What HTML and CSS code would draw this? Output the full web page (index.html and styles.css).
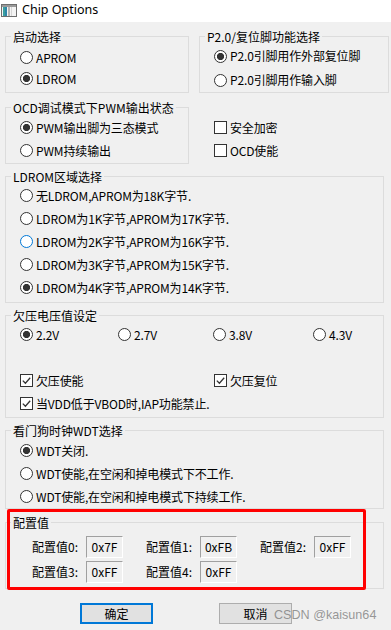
FILE: index.html
```html
<!DOCTYPE html>
<html lang="zh-CN">
<head>
<meta charset="utf-8">
<title>Chip Options</title>
<link rel="stylesheet" href="styles.css">
</head>
<body>
<div class="window">
  <header class="titlebar">
    <svg class="app-icon" width="16" height="13" viewBox="0 0 16 13" aria-hidden="true">
      <rect x="0.5" y="0.5" width="15" height="12" fill="#f4f4f4" stroke="#6e6e6e"/>
      <rect x="1" y="1" width="14" height="2" fill="#9a9a9a"/>
      <rect x="2" y="3" width="4" height="9" fill="#2f86a8"/>
      <rect x="2" y="3" width="2" height="9" fill="#3aa0a0"/>
      <rect x="7" y="3" width="2" height="9" fill="#b5b5b5"/>
      <rect x="10" y="3" width="1" height="9" fill="#d6d6d6"/>
    </svg>
    <span class="title">Chip Options</span>
  </header>

  <main class="content">
    <div class="row row-top">
      <fieldset class="grp grp-boot">
        <legend>启动选择</legend>
        <div class="opts">
          <div class="opt"><span class="radio"></span><span>APROM</span></div>
          <div class="opt"><span class="radio on"></span><span>LDROM</span></div>
        </div>
      </fieldset>
      <fieldset class="grp grp-p20">
        <legend>P2.0/复位脚功能选择</legend>
        <div class="opts">
          <div class="opt"><span class="radio on"></span><span>P2.0引脚用作外部复位脚</span></div>
          <div class="opt"><span class="radio"></span><span>P2.0引脚用作输入脚</span></div>
        </div>
      </fieldset>
    </div>

    <div class="row row-ocd">
      <fieldset class="grp grp-ocd">
        <legend>OCD调试模式下PWM输出状态</legend>
        <div class="opts">
          <div class="opt"><span class="radio on"></span><span>PWM输出脚为三态模式</span></div>
          <div class="opt"><span class="radio"></span><span>PWM持续输出</span></div>
        </div>
      </fieldset>
      <div class="side-checks">
        <div class="opt"><span class="check"></span><span>安全加密</span></div>
        <div class="opt"><span class="check"></span><span>OCD使能</span></div>
      </div>
    </div>

    <fieldset class="grp grp-ldrom">
      <legend>LDROM区域选择</legend>
      <div class="opts">
        <div class="opt"><span class="radio"></span><span>无LDROM,APROM为18K字节.</span></div>
        <div class="opt"><span class="radio"></span><span>LDROM为1K字节,APROM为17K字节.</span></div>
        <div class="opt"><span class="radio hover"></span><span>LDROM为2K字节,APROM为16K字节.</span></div>
        <div class="opt"><span class="radio"></span><span>LDROM为3K字节,APROM为15K字节.</span></div>
        <div class="opt"><span class="radio on"></span><span>LDROM为4K字节,APROM为14K字节.</span></div>
      </div>
    </fieldset>

    <fieldset class="grp grp-bod">
      <legend>欠压电压值设定</legend>
      <div class="bod-body">
        <div class="bod-radios">
          <div class="opt"><span class="radio on"></span><span>2.2V</span></div>
          <div class="opt"><span class="radio"></span><span>2.7V</span></div>
          <div class="opt"><span class="radio"></span><span>3.8V</span></div>
          <div class="opt"><span class="radio"></span><span>4.3V</span></div>
        </div>
        <div class="bod-gap"></div>
        <div class="bod-checks">
          <div class="opt"><span class="check on"><svg viewBox="0 0 11 11" width="11" height="11"><path d="M1.8 5.6 L4.4 8.2 L9.2 2.8" fill="none" stroke="#333" stroke-width="1.3"/></svg></span><span>欠压使能</span></div>
          <div class="opt"><span class="check on"><svg viewBox="0 0 11 11" width="11" height="11"><path d="M1.8 5.6 L4.4 8.2 L9.2 2.8" fill="none" stroke="#333" stroke-width="1.3"/></svg></span><span>欠压复位</span></div>
          <div class="opt wide"><span class="check on"><svg viewBox="0 0 11 11" width="11" height="11"><path d="M1.8 5.6 L4.4 8.2 L9.2 2.8" fill="none" stroke="#333" stroke-width="1.3"/></svg></span><span>当VDD低于VBOD时,IAP功能禁止.</span></div>
        </div>
      </div>
    </fieldset>

    <fieldset class="grp grp-wdt">
      <legend>看门狗时钟WDT选择</legend>
      <div class="opts">
        <div class="opt"><span class="radio on"></span><span>WDT关闭.</span></div>
        <div class="opt"><span class="radio"></span><span>WDT使能,在空闲和掉电模式下不工作.</span></div>
        <div class="opt"><span class="radio"></span><span>WDT使能,在空闲和掉电模式下持续工作.</span></div>
      </div>
    </fieldset>

    <fieldset class="grp grp-cfg">
      <legend>配置值</legend>
      <div class="cfg-grid">
        <div class="cfg"><span class="cfg-label">配置值0:</span><span class="cfg-box">0x7F</span></div>
        <div class="cfg"><span class="cfg-label">配置值1:</span><span class="cfg-box">0xFB</span></div>
        <div class="cfg"><span class="cfg-label">配置值2:</span><span class="cfg-box">0xFF</span></div>
        <div class="cfg"><span class="cfg-label">配置值3:</span><span class="cfg-box">0xFF</span></div>
        <div class="cfg"><span class="cfg-label">配置值4:</span><span class="cfg-box">0xFF</span></div>
      </div>
    </fieldset>

    <div class="buttons">
      <button class="btn btn-default" type="button">确定</button>
      <button class="btn" type="button">取消</button>
    </div>
  </main>

  <div class="annotation"></div>
  <div class="watermark">CSDN @kaisun64</div>
</div>
</body>
</html>
```

FILE: styles.css
```css
* { box-sizing: border-box; }

body {
  margin: 0;
  background: #f0f0f0;
  font-family: "Noto Sans CJK SC", "Noto Sans", sans-serif;
  font-size: 12px;
  color: #000;
}

.window {
  position: relative;
  width: 391px;
  height: 630px;
  overflow: hidden;
}

.titlebar {
  height: 22px;
  background: #fff;
  display: flex;
  align-items: center;
  padding-left: 1px;
  gap: 5px;
}

.app-icon { margin-top: -2px; flex: none; }

.title {
  font-family: "Noto Sans", sans-serif;
  font-size: 12.5px;
  line-height: 14px;
  margin-top: -2px;
}

.content { padding-left: 5px; }

.row { display: flex; align-items: flex-start; }

.grp {
  margin: 0;
  padding: 0;
  border: 1px solid #dcdcdc;
  min-width: 0;
}

.grp > legend {
  margin-left: 5px;
  padding: 0 2px;
  font-size: 12px;
  line-height: 15px;
}

.opts {
  display: flex;
  flex-direction: column;
  padding-left: 14px;
}

.opt {
  display: flex;
  align-items: center;
  gap: 3px;
  height: 23px;
  white-space: nowrap;
  line-height: 14px;
  letter-spacing: -0.15px;
}

.radio {
  flex: none;
  width: 13px;
  height: 13px;
  border: 1px solid #333;
  border-radius: 50%;
  background: #fff;
}
.radio.on { background: radial-gradient(circle at center, #333 0 3.3px, #fff 3.9px); }
.radio.hover { border-color: #0078d7; }

.check {
  flex: none;
  width: 13px;
  height: 13px;
  border: 1px solid #333;
  background: #fff;
  display: flex;
}
.check svg { display: block; }

/* row 1 */
.row-top { margin-top: 7px; }
.grp-boot { width: 184px; }
.grp-boot .opts { padding-top: 3px; padding-bottom: 3px; }
.grp-boot .opt { height: 21px; }
.grp-p20 { width: 190px; margin-left: 10px; }
.grp-p20 .opt { height: 24px; }

/* row 2 */
.row-ocd { margin-top: 7px; }
.grp-ocd { width: 184px; }
.grp-ocd .opts { padding-top: 1px; padding-bottom: 1px; }
.side-checks {
  margin-left: 25px;
  padding-top: 16px;
  display: flex;
  flex-direction: column;
}

/* LDROM */
.grp-ldrom { width: 379px; margin-top: 5px; }
.grp-ldrom .opts { padding-bottom: 3px; }

/* BOD */
.grp-bod { width: 379px; margin-top: 5px; }
.bod-body { padding: 0 0 2px 14px; }
.bod-radios {
  display: grid;
  grid-template-columns: 98px 95px 100px auto;
}
.bod-gap { height: 23px; }
.bod-checks {
  display: grid;
  grid-template-columns: 194px auto;
}
.bod-checks .wide { grid-column: 1 / -1; }

/* WDT */
.grp-wdt { width: 379px; margin-top: 5px; }
.grp-wdt .opts { padding-top: 1px; }

/* config values */
.grp-cfg { width: 379px; margin-top: 6px; }
.cfg-grid {
  display: grid;
  grid-template-columns: repeat(3, 91px);
  column-gap: 23px;
  row-gap: 3px;
  padding: 6px 0 5px 26px;
}
.cfg { display: flex; align-items: center; height: 22px; }
.cfg-label { width: 54px; line-height: 14px; white-space: nowrap; }
.cfg-box {
  width: 37px;
  height: 22px;
  border: 1px solid;
  border-color: #a0a0a0 #ffffff #ffffff #a0a0a0;
  background: #f0f0f0;
  display: flex;
  align-items: center;
  justify-content: center;
  line-height: 14px;
}

/* buttons */
.buttons {
  display: flex;
  gap: 66px;
  margin-top: 14px;
  padding-left: 75px;
}
.btn {
  width: 73px;
  height: 21px;
  margin: 0;
  padding: 0;
  background: #e1e1e1;
  border: 1px solid #adadad;
  font-family: "Noto Sans CJK SC", sans-serif;
  font-size: 12px;
  line-height: 14px;
  color: #000;
}
.btn-default { border: 2px solid #0078d7; }

/* overlays: screenshot annotation + watermark */
.annotation {
  position: absolute;
  left: 7px;
  top: 509px;
  width: 359px;
  height: 81px;
  border: 3px solid #ff0000;
  border-radius: 2px;
}

.watermark {
  position: absolute;
  left: 274px;
  top: 607px;
  font-family: "Liberation Sans", Arial, sans-serif;
  font-size: 12.6px;
  line-height: 16px;
  color: rgba(110, 110, 110, 0.7);
  white-space: nowrap;
}
```
